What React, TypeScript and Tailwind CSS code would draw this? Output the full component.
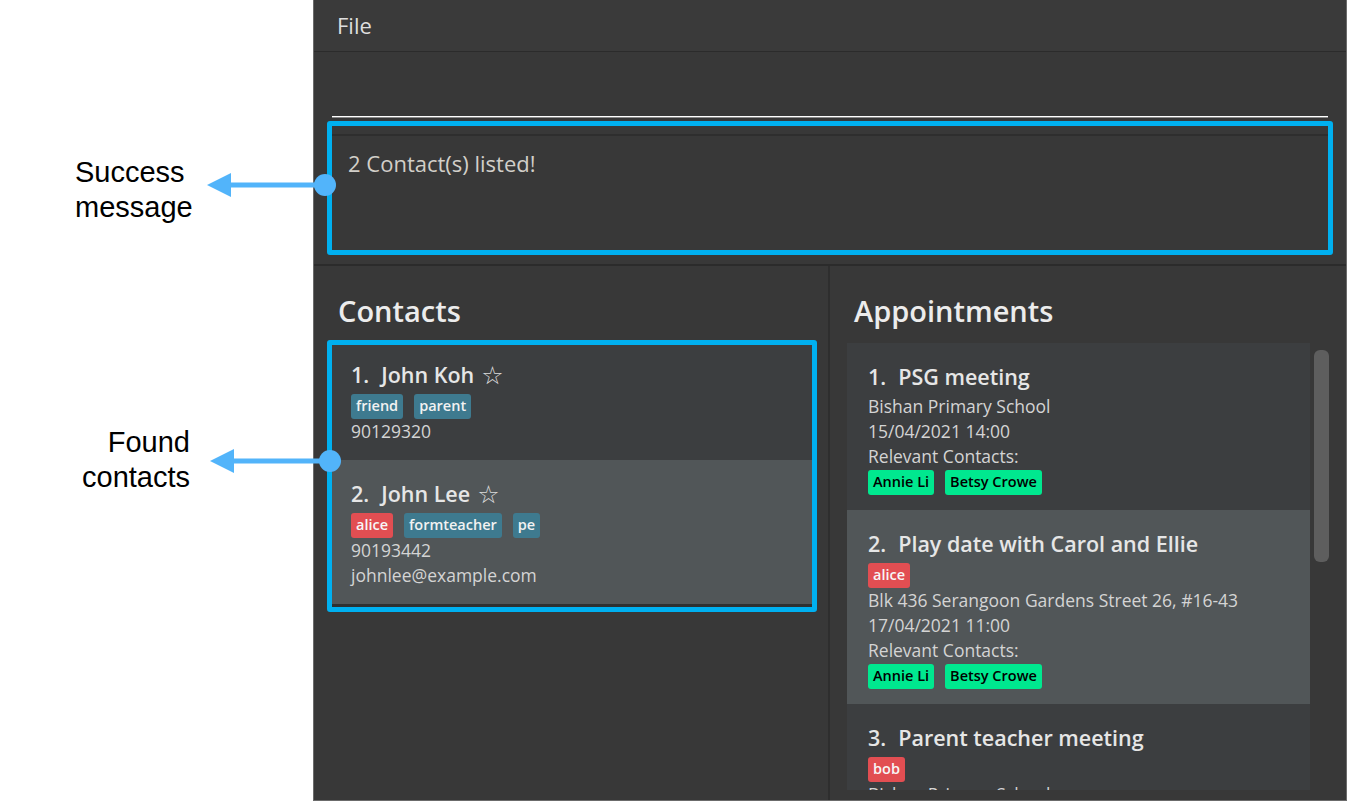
import React from "react";

const FONT = { fontFamily: '"Open Sans", "Noto Sans", sans-serif' };

function Tag({ label, color }: { label: string; color: "blue" | "red" | "green" }) {
  const cls =
    color === "blue"
      ? "bg-[#3e7a8f] text-[#f2f2f2]"
      : color === "red"
      ? "bg-[#e24e52] text-[#f7f7f7]"
      : "bg-[#00e88f] text-black";
  return (
    <span className={`flex h-[25px] items-center rounded-[3px] px-[5px] text-[14.5px] font-semibold leading-none ${cls}`}>
      {label}
    </span>
  );
}

function ContactCard({
  idx,
  name,
  tags,
  lines,
  alt,
  pt,
}: {
  idx: number;
  name: string;
  tags: { label: string; color: "blue" | "red" | "green" }[];
  lines: string[];
  alt?: boolean;
  pt: string;
}) {
  return (
    <div className={`${alt ? "bg-[#515658]" : "bg-[#3c3e40]"} ${pt} pb-[16px] pl-[19px]`}>
      <div className="flex h-[26px] items-center text-[21.5px] font-semibold leading-none text-[#e6e6e6]">
        <span>{idx}.</span>
        <span className="ml-[12px]">{name}</span>
        <span className="ml-[7px] text-[25px] font-normal text-[#dcdcdc]" style={{ fontFamily: '"DejaVu Sans", sans-serif' }}>
          ☆
        </span>
      </div>
      <div className="mt-[6px] flex gap-[11px]">
        {tags.map((t) => (
          <Tag key={t.label} label={t.label} color={t.color} />
        ))}
      </div>
      {lines.map((l) => (
        <div key={l} className="text-[17.5px] leading-[25px] text-[#d4d4d4]">
          {l}
        </div>
      ))}
    </div>
  );
}

function ApptCard({
  idx,
  title,
  tags,
  lines,
  contacts,
  alt,
}: {
  idx: number;
  title: string;
  tags: { label: string; color: "blue" | "red" | "green" }[];
  lines: string[];
  contacts?: string[];
  alt?: boolean;
}) {
  return (
    <div className={`${alt ? "bg-[#515658]" : "bg-[#3c3e40]"} pt-[21px] pb-[15px] pl-[21px]`}>
      <div className="flex h-[26px] items-center text-[21.5px] font-semibold leading-none text-[#e6e6e6]">
        <span>{idx}.</span>
        <span className="ml-[12px]">{title}</span>
      </div>
      {tags.length > 0 ? (
        <div className="mt-[6px] flex gap-[11px]">
          {tags.map((t) => (
            <Tag key={t.label} label={t.label} color={t.color} />
          ))}
        </div>
      ) : (
        <div className="h-[4px]" />
      )}
      {lines.map((l) => (
        <div key={l} className="text-[17.5px] leading-[25px] text-[#d4d4d4]">
          {l}
        </div>
      ))}
      {contacts && (
        <>
          <div className="text-[17.5px] leading-[25px] text-[#d4d4d4]">Relevant Contacts:</div>
          <div className="mt-[1px] flex gap-[11px]">
            {contacts.map((c) => (
              <Tag key={c} label={c} color="green" />
            ))}
          </div>
        </>
      )}
    </div>
  );
}

export default function App() {
  return (
    <div className="relative flex h-[802px] w-[1347px] overflow-hidden bg-white" style={FONT}>
      {/* annotation column */}
      <div className="w-[313px] shrink-0" />

      {/* application window */}
      <div className="flex h-[801px] w-[1034px] shrink-0 flex-col border-x border-b border-[#6b6b6b] bg-[#383838]">
        {/* menu bar */}
        <div className="flex h-[52px] shrink-0 items-center border-b border-[#2b2b2b] bg-[#3a3a3a] pl-[23px] pb-[1px]">
          <span className="text-[22px] leading-none text-[#dedede]">File</span>
        </div>

        {/* command box */}
        <div className="flex h-[69px] shrink-0 items-end px-[18px] pb-[3px]">
          <div className="h-[2px] w-full border-t border-white bg-[#8a8a8a]" />
        </div>

        {/* result display */}
        <div className="h-[145px] shrink-0 border-b-2 border-[#2b2b2b] px-[13px] pb-[10px]">
          <div className="h-[134px] rounded-[3px] border-[5px] border-[#00b0f0]">
            <div className="mt-[8px] h-[115px] border-t-2 border-[#2e2e2e] pl-[16px] pt-[12px]">
              <span className="text-[22px] leading-[30px] text-[#d2cfc9]">2 Contact(s) listed!</span>
            </div>
          </div>
        </div>

        {/* panels */}
        <div className="flex min-h-0 flex-1">
          {/* contacts */}
          <div className="flex w-[516px] shrink-0 flex-col border-r-2 border-[#2e2e2e] pl-[13px] pt-[27px]">
            <div className="pl-[11px] text-[29px] font-semibold leading-[36px] text-[#ececec]">Contacts</div>
            <div className="mt-[11px] w-[490px] rounded-[3px] border-[5px] border-[#00b0f0]">
              <ContactCard
                idx={1}
                name="John Koh"
                pt="pt-[17px]"
                tags={[
                  { label: "friend", color: "blue" },
                  { label: "parent", color: "blue" },
                ]}
                lines={["90129320"]}
              />
              <ContactCard
                idx={2}
                name="John Lee"
                alt
                pt="pt-[21px]"
                tags={[
                  { label: "alice", color: "red" },
                  { label: "formteacher", color: "blue" },
                  { label: "pe", color: "blue" },
                ]}
                lines={["90193442", "johnlee@example.com"]}
              />
              <div className="h-[3px] bg-[#2e3132]" />
            </div>
          </div>

          {/* appointments */}
          <div className="flex min-w-0 flex-1 flex-col pl-[17px] pt-[27px]">
            <div className="pl-[7px] text-[29px] font-semibold leading-[36px] text-[#ececec]">Appointments</div>
            <div className="mt-[14px] flex min-h-0 flex-1 pb-[10px]">
              <div className="w-[463px] shrink-0 overflow-hidden">
                <ApptCard
                  idx={1}
                  title="PSG meeting"
                  tags={[]}
                  lines={["Bishan Primary School", "15/04/2021 14:00"]}
                  contacts={["Annie Li", "Betsy Crowe"]}
                />
                <ApptCard
                  idx={2}
                  title="Play date with Carol and Ellie"
                  alt
                  tags={[{ label: "alice", color: "red" }]}
                  lines={["Blk 436 Serangoon Gardens Street 26, #16-43", "17/04/2021 11:00"]}
                  contacts={["Annie Li", "Betsy Crowe"]}
                />
                <ApptCard
                  idx={3}
                  title="Parent teacher meeting"
                  tags={[{ label: "bob", color: "red" }]}
                  lines={["Bishan Primary School", "20/04/2021 15:00"]}
                />
              </div>
              <div className="ml-[4px] w-[15px] shrink-0 pt-[7px]">
                <div className="h-[212px] w-[15px] rounded-[6px] bg-[#5e5e5e]" />
              </div>
            </div>
          </div>
        </div>
      </div>

      {/* annotation labels */}
      <div
        className="absolute left-[75px] top-[155px] text-[29px] leading-[35px] text-black"
        style={{ fontFamily: '"Liberation Sans", Arial, sans-serif' }}
      >
        <div>Success</div>
        <div>message</div>
      </div>
      <div
        className="absolute right-[1157px] top-[425px] text-right text-[29px] leading-[35px] text-black"
        style={{ fontFamily: '"Liberation Sans", Arial, sans-serif' }}
      >
        <div>Found</div>
        <div>contacts</div>
      </div>

      {/* annotation arrows */}
      <svg className="pointer-events-none absolute left-0 top-0" width="1347" height="802">
        <line x1="225" y1="185" x2="325" y2="185" stroke="#52b4fa" strokeWidth="5" />
        <polygon points="207,185 231,173 231,197" fill="#52b4fa" />
        <circle cx="325" cy="185" r="11" fill="#52b4fa" />
        <line x1="228" y1="461" x2="330" y2="461" stroke="#52b4fa" strokeWidth="5" />
        <polygon points="210,461 234,449 234,473" fill="#52b4fa" />
        <circle cx="330" cy="461" r="11" fill="#52b4fa" />
      </svg>
    </div>
  );
}
